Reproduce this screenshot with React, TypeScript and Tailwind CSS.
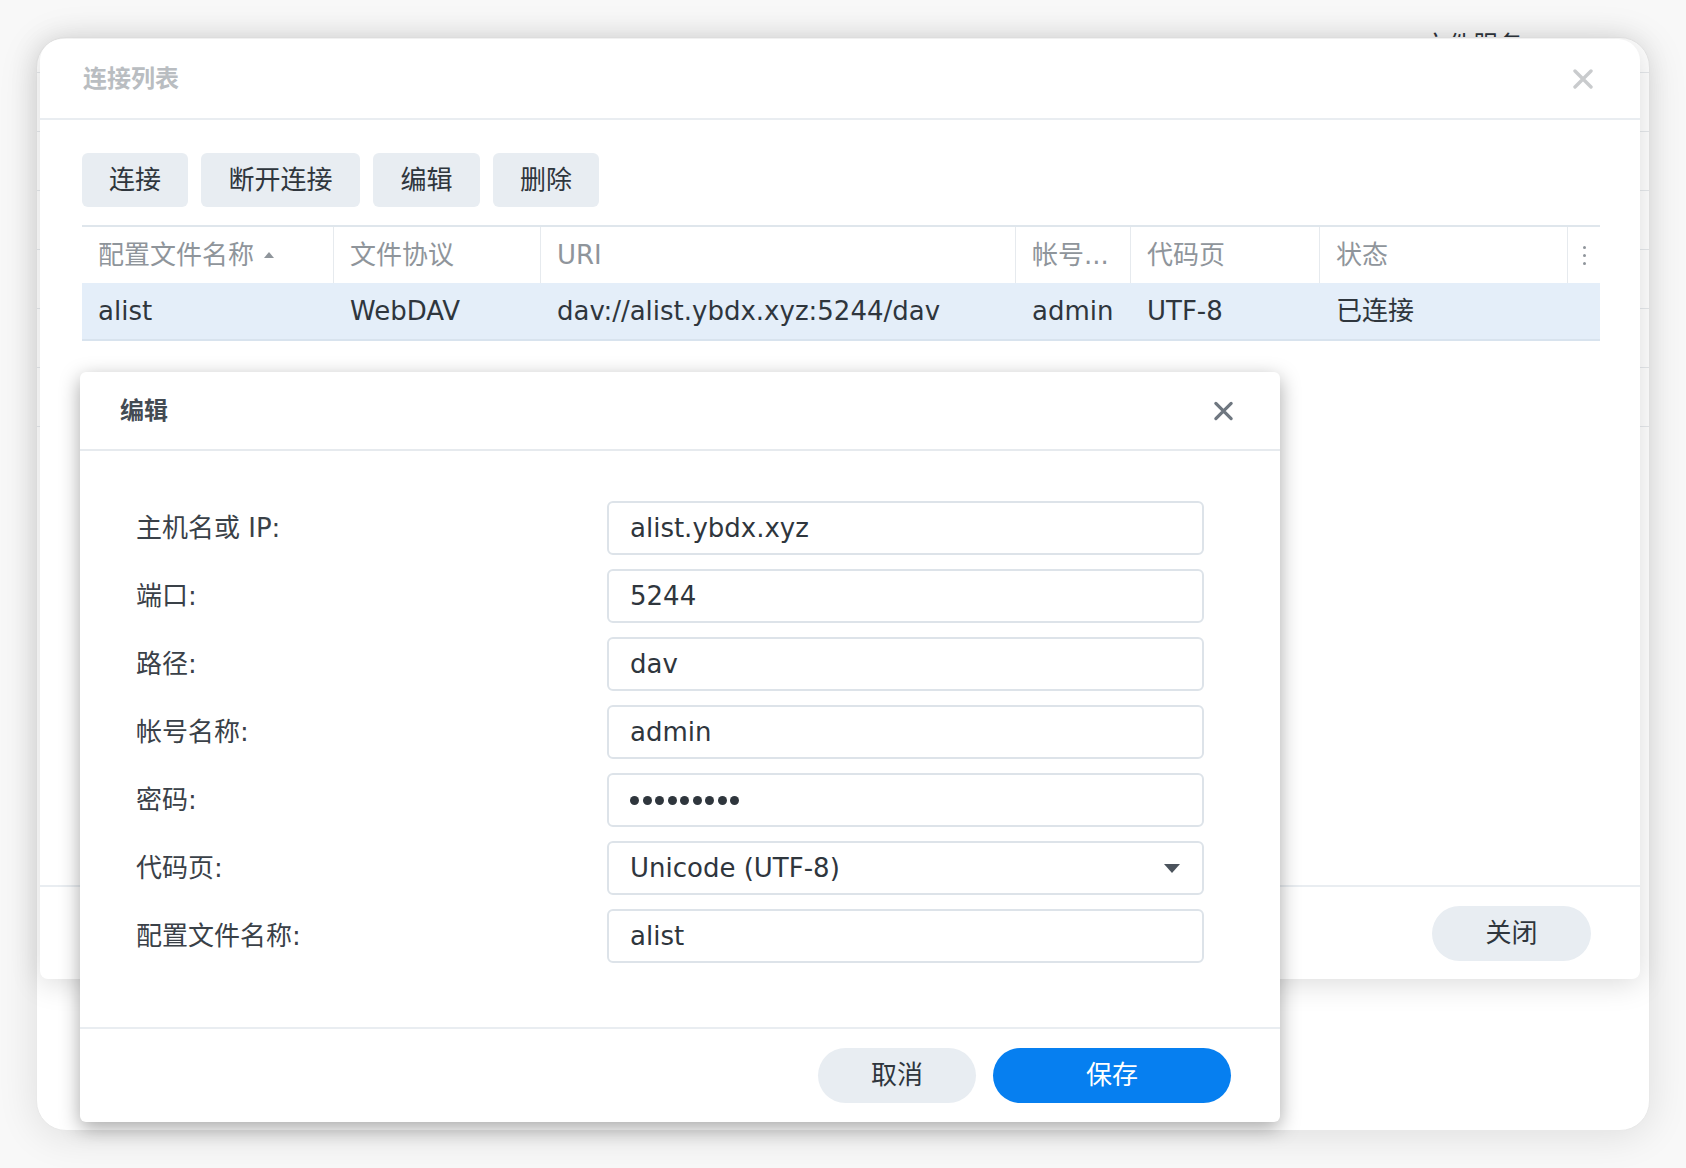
import React from 'react';

const FONT = "font-['DejaVu_Sans','Noto_Sans_CJK_SC',sans-serif]";

const CloseIcon = ({ className }: { className: string }) => (
  <svg viewBox="0 0 22 20" className={className} fill="none" stroke="currentColor" strokeWidth={3.4} strokeLinecap="round">
    <path d="M3 2L19 18M19 2L3 18" />
  </svg>
);

const TOOLBAR = [
  { label: '连接', w: 'w-[106px]' },
  { label: '断开连接', w: 'w-[159px]' },
  { label: '编辑', w: 'w-[107px]' },
  { label: '删除', w: 'w-[106px]' },
];

const COLUMNS = [
  { name: '配置文件名称', value: 'alist', w: 'w-[252px]', sort: true },
  { name: '文件协议', value: 'WebDAV', w: 'w-[207px]' },
  { name: 'URI', value: 'dav://alist.ybdx.xyz:5244/dav', w: 'w-[475px]' },
  { name: '帐号...', value: 'admin', w: 'w-[115px]' },
  { name: '代码页', value: 'UTF-8', w: 'w-[189px]' },
  { name: '状态', value: '已连接', w: 'w-[248px]' },
];

const FIELDS = [
  { label: '主机名或 IP:', value: 'alist.ybdx.xyz' },
  { label: '端口:', value: '5244' },
  { label: '路径:', value: 'dav' },
  { label: '帐号名称:', value: 'admin' },
  { label: '密码:', value: '', password: true },
  { label: '代码页:', value: 'Unicode (UTF-8)', select: true },
  { label: '配置文件名称:', value: 'alist' },
];

const BackgroundWindow = () => (
  <>
    {/* cut-off title of the window behind, peeking above the dialog */}
    <div className="absolute left-[1423px] top-[31px] h-[9px] overflow-hidden">
      <span className="block text-[25px] leading-[30px] text-[#2f363d]">文件服务</span>
    </div>
    <div className="absolute left-[36px] top-[37px] w-[1614px] h-[1094px] bg-white rounded-[30px] border border-[#e9e9e9] shadow-[0_4px_40px_rgba(0,0,0,0.11)] overflow-hidden">
      <div className="h-[35px] border-b border-[#e6e9ec]" />
      {[0, 1, 2, 3, 4, 5].map((i) => (
        <div key={i} className="h-[59px] border-b border-[#e6e9ec]" />
      ))}
    </div>
  </>
);

const ConnectionList = () => (
  <div className="absolute left-[40px] top-[39px] w-[1600px] h-[940px] bg-white rounded-t-[22px] rounded-b-[8px] shadow-[0_4px_30px_rgba(0,0,0,0.15)] flex flex-col">
    <div className="h-[81px] shrink-0 border-b-2 border-[#e9edf1] flex items-center justify-between pl-[43px] pr-[46px]">
      <span className="text-[24px] font-semibold text-[#b9bdc1]">连接列表</span>
      <CloseIcon className="w-[22px] h-[20px] text-[#c9cbcd]" />
    </div>

    <div className="flex-1 pl-[42px] pr-[40px] pt-[33px]">
      <div className="flex gap-[13px]">
        {TOOLBAR.map((b) => (
          <button key={b.label} className={`${b.w} h-[54px] rounded-[6px] bg-[#e8edf2] text-[26px] text-[#2f363d]`}>
            {b.label}
          </button>
        ))}
      </div>

      <div className="mt-[18px]">
        <div className="flex h-[58px] border-t-2 border-[#dfe6ec]">
          {COLUMNS.map((c) => (
            <div key={c.name} className={`${c.w} shrink-0 border-r border-[#e6eaee] pl-[16px] flex items-center gap-[10px] text-[26px] text-[#8f959b]`}>
              <span>{c.name}</span>
              {c.sort && (
                <svg viewBox="0 0 10 6" className="w-[10px] h-[6px] text-[#8f959b]" fill="currentColor">
                  <path d="M0 6L5 0L10 6Z" />
                </svg>
              )}
            </div>
          ))}
          <div className="flex-1 flex flex-col items-center justify-center gap-[5px]">
            <span className="w-[3px] h-[3px] rounded-full bg-[#8f959b]" />
            <span className="w-[3px] h-[3px] rounded-full bg-[#8f959b]" />
            <span className="w-[3px] h-[3px] rounded-full bg-[#8f959b]" />
          </div>
        </div>
        <div className="flex h-[58px] bg-[#e4eef9] border-b-2 border-[#d8e3ee]">
          {COLUMNS.map((c) => (
            <div key={c.name} className={`${c.w} shrink-0 pl-[16px] flex items-center text-[26px] text-[#2f363d] whitespace-nowrap`}>
              {c.value}
            </div>
          ))}
        </div>
      </div>
    </div>

    <div className="h-[94px] shrink-0 border-t-2 border-[#e9edf1] flex items-center justify-end pr-[49px]">
      <button className="w-[159px] h-[55px] rounded-full bg-[#e8edf2] text-[26px] text-[#2f363d]">关闭</button>
    </div>
  </div>
);

const EditDialog = () => (
  <div className="absolute left-[80px] top-[372px] w-[1200px] h-[750px] bg-white rounded-[6px] shadow-[0_6px_20px_rgba(0,0,0,0.35)] flex flex-col">
    <div className="h-[79px] shrink-0 border-b-2 border-[#e6eaee] flex items-center justify-between pl-[40px] pr-[46px]">
      <span className="text-[24px] font-semibold text-[#434b53]">编辑</span>
      <CloseIcon className="w-[21px] h-[20px] text-[#6f7780]" />
    </div>

    <div className="flex-1 pt-[50px] pl-[56px] flex flex-col gap-[14px]">
      {FIELDS.map((f) => (
        <div key={f.label} className="flex items-center h-[54px]">
          <span className="w-[471px] shrink-0 text-[26px] text-[#3a4148]">{f.label}</span>
          <div className="w-[597px] h-[54px] rounded-[6px] border-2 border-[#dde3e9] bg-white pl-[21px] pr-[22px] flex items-center justify-between text-[26px] text-[#2f363d]">
            {f.password ? (
              <div className="flex gap-[3.5px]">
                {[0, 1, 2, 3, 4, 5, 6, 7, 8].map((i) => (
                  <span key={i} className="w-[9px] h-[9px] rounded-full bg-[#2f363d]" />
                ))}
              </div>
            ) : (
              <span>{f.value}</span>
            )}
            {f.select && (
              <svg viewBox="0 0 16 9" className="w-[16px] h-[9px] text-[#4b535c]" fill="currentColor">
                <path d="M0 0H16L8 9Z" />
              </svg>
            )}
          </div>
        </div>
      ))}
    </div>

    <div className="h-[95px] shrink-0 border-t-2 border-[#e9edf1] flex items-center justify-end gap-[17px] pr-[49px]">
      <button className="w-[158px] h-[55px] rounded-full bg-[#e8edf2] text-[26px] text-[#2f363d]">取消</button>
      <button className="w-[238px] h-[55px] rounded-full bg-[#067ff0] text-[26px] text-white">保存</button>
    </div>
  </div>
);

export default function App() {
  return (
    <div className={`relative w-[1686px] h-[1168px] overflow-hidden bg-[#f8f8f8] ${FONT}`}>
      <BackgroundWindow />
      <ConnectionList />
      <EditDialog />
    </div>
  );
}
